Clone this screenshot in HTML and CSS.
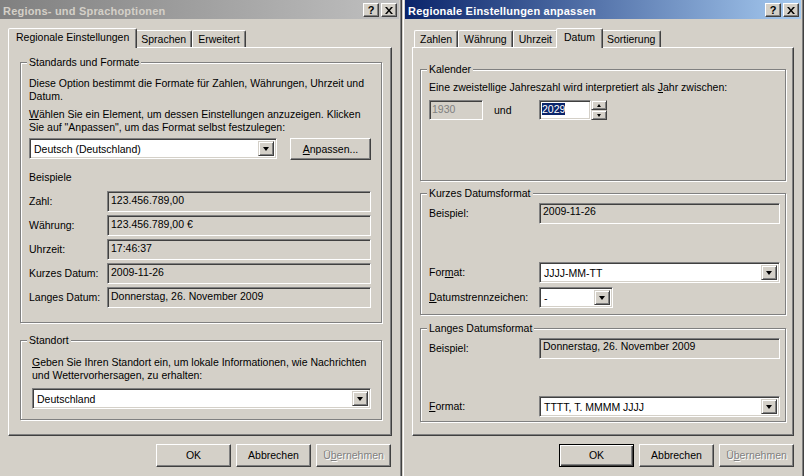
FILE: index.html
```html
<!DOCTYPE html>
<html lang="de">
  <head>
    <meta charset="UTF-8" />
    <title>Regions- und Sprachoptionen</title>
    <link rel="stylesheet" href="styles.css">
  </head>
  <body>
    <div class="desktop">
      <!-- Regions- und Sprachoptionen (inactive) -->
      <div class="window win-left">
        <div class="titlebar inactive">
          <span class="title">Regions- und Sprachoptionen</span>
          <span class="caption-btn">?</span>
          <span class="caption-btn close">
            <svg width="8" height="7" viewBox="0 0 8 7"><path d="M0 0h2l2 2.5L6 0h2L5 3.5 8 7H6L4 4.5 2 7H0l3-3.5z" /></svg>
          </span>
        </div>
        <div class="client client-left">
          <div class="tabs">
            <div class="tab active">Regionale Einstellungen</div>
            <div class="tab">Sprachen</div>
            <div class="tab">Erweitert</div>
          </div>
          <div class="sheet sheet-left">
            <fieldset class="group group-formats">
              <legend>Standards und Formate</legend>
              <p class="text">Diese Option bestimmt die Formate für Zahlen, Währungen, Uhrzeit und<br>Datum.</p>
              <p class="text text-gap"><u>W</u>ählen Sie ein Element, um dessen Einstellungen anzuzeigen. Klicken<br>Sie auf "Anpassen", um das Format selbst festzulegen:</p>
              <div class="combo-row">
                <div class="combo locale"><span class="value">Deutsch (Deutschland)</span><span class="drop"></span></div>
                <button class="btn btn-custom"><u>A</u>npassen...</button>
              </div>
              <div class="caption">Beispiele</div>
              <div class="samples">
                <div class="sample"><span class="label">Zahl:</span><span class="field">123.456.789,00</span></div>
                <div class="sample"><span class="label">Währung:</span><span class="field">123.456.789,00 €</span></div>
                <div class="sample"><span class="label">Uhrzeit:</span><span class="field">17:46:37</span></div>
                <div class="sample"><span class="label">Kurzes Datum:</span><span class="field">2009-11-26</span></div>
                <div class="sample"><span class="label">Langes Datum:</span><span class="field">Donnerstag, 26. November 2009</span></div>
              </div>
            </fieldset>
            <fieldset class="group group-location">
              <legend>Standort</legend>
              <p class="text"><u>G</u>eben Sie Ihren Standort ein, um lokale Informationen, wie Nachrichten<br>und Wettervorhersagen, zu erhalten:</p>
              <div class="combo location"><span class="value">Deutschland</span><span class="drop"></span></div>
            </fieldset>
          </div>
          <div class="actions">
            <button class="btn">OK</button>
            <button class="btn">Abbrechen</button>
            <button class="btn" disabled>Ü<u>b</u>ernehmen</button>
          </div>
        </div>
      </div>

      <!-- Regionale Einstellungen anpassen (active) -->
      <div class="window win-right">
        <div class="titlebar active">
          <span class="title">Regionale Einstellungen anpassen</span>
          <span class="caption-btn">?</span>
          <span class="caption-btn close">
            <svg width="8" height="7" viewBox="0 0 8 7"><path d="M0 0h2l2 2.5L6 0h2L5 3.5 8 7H6L4 4.5 2 7H0l3-3.5z" /></svg>
          </span>
        </div>
        <div class="client client-right">
          <div class="tabs">
            <div class="tab">Zahlen</div>
            <div class="tab">Währung</div>
            <div class="tab">Uhrzeit</div>
            <div class="tab active">Datum</div>
            <div class="tab">Sortierung</div>
          </div>
          <div class="sheet sheet-right">
            <fieldset class="group group-calendar">
              <legend>Kalender</legend>
              <p class="text">Eine zweistellige Jahreszahl wird interpretiert als <u>J</u>ahr zwischen:</p>
              <div class="year-row">
                <span class="edit disabled">1930</span>
                <span class="and">und</span>
                <span class="edit year"><span class="sel">2029</span></span>
                <span class="spin"><span class="spin-btn up"></span><span class="spin-btn down"></span></span>
              </div>
            </fieldset>
            <fieldset class="group group-short">
              <legend>Kurzes Datumsformat</legend>
              <div class="form-row">
                <span class="label">Beispiel:</span>
                <span class="field top">2009-11-26</span>
              </div>
              <div class="form-row row-format">
                <span class="label">For<u>m</u>at:</span>
                <div class="combo grow"><span class="value">JJJJ-MM-TT</span><span class="drop"></span></div>
              </div>
              <div class="form-row row-sep">
                <span class="label"><u>D</u>atumstrennzeichen:</span>
                <div class="combo sep"><span class="value">-</span><span class="drop"></span></div>
              </div>
            </fieldset>
            <fieldset class="group group-long">
              <legend>Langes Datumsformat</legend>
              <div class="form-row">
                <span class="label">Beispiel:</span>
                <span class="field top">Donnerstag, 26. November 2009</span>
              </div>
              <div class="form-row row-format-long">
                <span class="label"><u>F</u>ormat:</span>
                <div class="combo grow"><span class="value">TTTT, T. MMMM JJJJ</span><span class="drop"></span></div>
              </div>
            </fieldset>
          </div>
          <div class="actions">
            <button class="btn default">OK</button>
            <button class="btn">Abbrechen</button>
            <button class="btn" disabled>Ü<u>b</u>ernehmen</button>
          </div>
        </div>
      </div>
    </div>
  </body>
</html>
```

FILE: styles.css
```css
* {
  box-sizing: border-box;
}
body {
  margin: 0;
  font-family: "Liberation Sans", Arial, sans-serif;
  font-size: 10.5px;
  line-height: 13px;
  color: #000;
  background-color: #d4d0c8;
}
p {
  margin: 0;
  white-space: nowrap;
}
u {
  text-decoration-thickness: 1px;
  text-underline-offset: 1px;
}
.desktop {
  display: flex;
  width: 804px;
  height: 476px;
  overflow: hidden;
}

/* window frames */
.window {
  display: flex;
  flex-direction: column;
  width: 402px;
  height: 476px;
  background-color: #d4d0c8;
}
.win-left {
  border-right: 1px solid #404040;
  box-shadow: inset -1px 0 #808080;
  padding-right: 2px;
}
.win-right {
  border-left: 1px solid #d4d0c8;
  border-right: 1px solid #404040;
  box-shadow: inset 1px 0 #fff, inset -1px 0 #808080;
  padding: 0 2px;
}
.titlebar {
  display: flex;
  align-items: flex-start;
  height: 19px;
  padding: 3px 2px 0 3px;
  font-size: 11px;
  font-weight: bold;
}
.titlebar.inactive {
  background: linear-gradient(to right, #808080, #c0c0c0);
  color: #d4d0c8;
}
.titlebar.active {
  background: linear-gradient(to right, #0a246a, #a6caf0);
  color: #fff;
}
.title {
  flex: 1;
  margin-top: 2px;
  letter-spacing: 0.2px;
  white-space: nowrap;
}
.caption-btn {
  display: flex;
  align-items: center;
  justify-content: center;
  width: 16px;
  height: 14px;
  background-color: #d4d0c8;
  border: 1px solid;
  border-color: #fff #404040 #404040 #fff;
  box-shadow: inset -1px -1px #808080;
  color: #000;
  font-weight: bold;
  font-size: 11px;
  line-height: 12px;
}
.caption-btn.close {
  margin-left: 2px;
}
.caption-btn svg {
  fill: #000;
  margin-left: -1px;
}

/* client area */
.client {
  flex: 1;
  display: flex;
  flex-direction: column;
  padding-top: 9px;
}
.client-left {
  padding-left: 8px;
  padding-right: 7px;
}
.client-right {
  padding-left: 7px;
  padding-right: 7px;
}
.tabs {
  display: flex;
  align-items: flex-end;
  height: 19px;
  padding-left: 2px;
}
.tab {
  height: 17px;
  padding: 2px 5px 0;
  border: 1px solid;
  border-bottom: 0;
  border-color: #fff #404040 transparent #fff;
  border-radius: 2px 2px 0 0;
  box-shadow: inset -1px 0 #808080;
  white-space: nowrap;
}
.tab.active {
  position: relative;
  z-index: 1;
  height: 20px;
  margin: 0 -2px -1px;
  padding: 2px 7px 0;
  background-color: #d4d0c8;
}
.sheet {
  height: 389px;
  border: 1px solid;
  border-color: #fff #404040 #404040 #fff;
  box-shadow: inset -1px -1px #808080;
}
.sheet-left {
  padding: 8px 9px 0 11px;
}
.sheet-right {
  padding: 15px 7px 0 7px;
}

/* group boxes */
.group {
  margin: 0;
  min-inline-size: 0;
  border: 1px solid #808080;
  box-shadow: inset 1px 1px #fff, 1px 1px #fff;
}
.group legend {
  padding: 0 2px;
  margin-left: -2px;
  background-color: #d4d0c8;
}
.group-formats {
  padding: 8px 10px 14px 8px;
}
.text-gap {
  margin-top: 5px;
}
.combo-row {
  display: flex;
  margin-top: 4px;
}
.caption {
  margin-top: 11px;
}
.samples {
  display: flex;
  flex-direction: column;
  gap: 3px;
  margin-top: 7px;
}
.sample {
  display: flex;
  align-items: center;
  height: 21px;
}
.sample .label {
  width: 78px;
}
.group-location {
  margin-top: 11px;
  padding: 9px 10px 10px 11px;
}
.group-location legend {
  margin-left: -5px;
}
.group-location .combo {
  margin-top: 6px;
}
.group-calendar {
  padding: 5px 5px 60px 8px;
}
.group-short {
  margin-top: 6px;
  padding: 3px 5px 6px 8px;
}
.group-long {
  margin-top: 7px;
  padding: 3px 5px 4px 8px;
}

/* controls */
.combo {
  display: flex;
  height: 21px;
  padding: 2px;
  background-color: #fff;
  border: 1px solid;
  border-color: #808080 #fff #fff #808080;
  box-shadow: inset 1px 1px #404040, inset -1px -1px #d4d0c8;
}
.combo .value {
  flex: 1;
  padding-left: 2px;
  line-height: 17px;
  white-space: nowrap;
}
.combo .drop {
  display: flex;
  align-items: center;
  justify-content: center;
  width: 16px;
  background-color: #d4d0c8;
  border: 1px solid;
  border-color: #d4d0c8 #404040 #404040 #d4d0c8;
  box-shadow: inset 1px 1px #fff, inset -1px -1px #808080;
}
.combo .drop::after {
  content: "";
  border-style: solid;
  border-width: 4px 3.5px 0;
  border-color: #000 transparent transparent;
}
.combo.locale {
  width: 248px;
}
.combo.grow {
  flex: 1;
}
.combo.sep {
  width: 74px;
}
.field {
  flex: 1;
  height: 21px;
  padding: 0 3px;
  line-height: 17px;
  border: 1px solid;
  border-color: #808080 #fff #fff #808080;
  box-shadow: inset 1px 1px #404040, inset -1px -1px #d4d0c8;
  white-space: nowrap;
}
.field.top {
  padding-top: 1px;
  line-height: 13px;
}
.btn {
  width: 75px;
  height: 23px;
  padding: 0;
  font: inherit;
  color: #000;
  background-color: #d4d0c8;
  border: 1px solid;
  border-color: #fff #404040 #404040 #fff;
  box-shadow: inset -1px -1px #808080;
}
.btn.default {
  border-color: #000;
  box-shadow: inset 1px 1px #fff, inset -1px -1px #404040, inset -2px -2px #808080;
}
.btn:disabled {
  color: #808080;
  text-shadow: 1px 1px #fff;
}
.btn-custom {
  width: 81px;
  height: 22px;
  margin-left: auto;
}
.actions {
  display: flex;
  justify-content: flex-end;
  gap: 5px;
  margin-top: 8px;
}
.client-left .actions {
  padding-right: 1px;
}

/* date tab rows */
.form-row {
  display: flex;
  align-items: center;
  height: 21px;
}
.form-row .label {
  width: 110px;
  white-space: nowrap;
}
.row-format {
  margin-top: 38px;
}
.row-sep {
  margin-top: 4px;
}
.row-format-long {
  margin-top: 37px;
}
.year-row {
  display: flex;
  align-items: center;
  height: 20px;
  margin-top: 6px;
}
.edit {
  height: 20px;
  padding: 0 2px;
  line-height: 16px;
  border: 1px solid;
  border-color: #808080 #fff #fff #808080;
  box-shadow: inset 1px 1px #404040, inset -1px -1px #d4d0c8;
}
.edit.disabled {
  width: 54px;
  color: #808080;
}
.edit.year {
  width: 52px;
  background-color: #fff;
}
.sel {
  background-color: #0a246a;
  color: #fff;
}
.and {
  width: 56px;
  padding-left: 11px;
}
.spin {
  display: flex;
  flex-direction: column;
  width: 16px;
  height: 20px;
}
.spin-btn {
  flex: 1;
  display: flex;
  align-items: center;
  justify-content: center;
  background-color: #d4d0c8;
  border: 1px solid;
  border-color: #d4d0c8 #404040 #404040 #d4d0c8;
  box-shadow: inset 1px 1px #fff, inset -1px -1px #808080;
}
.spin-btn::after {
  content: "";
  border-style: solid;
  border-color: transparent;
}
.spin-btn.up::after {
  border-width: 0 2.5px 3px;
  border-bottom-color: #000;
}
.spin-btn.down::after {
  border-width: 3px 2.5px 0;
  border-top-color: #000;
}
```
